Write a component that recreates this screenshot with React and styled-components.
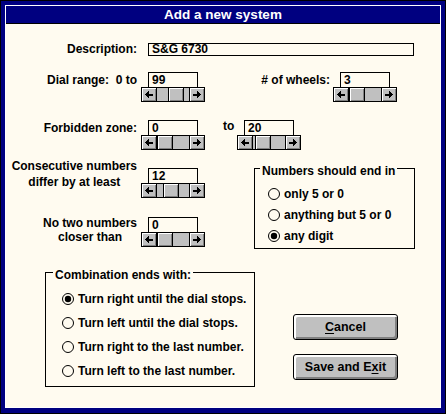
import styled, { createGlobalStyle } from "styled-components";

const GlobalStyle = createGlobalStyle`
  html, body {
    margin: 0;
    padding: 0;
    background: #000080;
    overflow: hidden;
  }
  body {
    font-family: "Liberation Sans", Arial, sans-serif;
    font-weight: 700;
    font-size: 12px;
    color: #000;
  }
`;

const Window = styled.div`
  width: 446px;
  height: 414px;
  box-sizing: border-box;
  border: 1px solid #000;
  background: #000080;
  padding: 4px 4px 5px 4px;
`;

const Frame = styled.div`
  height: 100%;
  box-sizing: border-box;
  border: 1px solid #fff;
  background: #fffbf0;
  display: flex;
  flex-direction: column;
`;

const TitleBar = styled.header`
  height: 17px;
  line-height: 17px;
  border-bottom: 1px solid #000;
  background: #000080;
  color: #fff;
  font-size: 13.5px;
  text-align: center;
`;

const Row = styled.div`
  display: flex;
  align-items: flex-start;
  margin-top: ${(p) => p.$top || 0}px;
  margin-left: ${(p) => p.$left || 0}px;
`;

const Label = styled.div`
  width: ${(p) => p.$width}px;
  text-align: right;
  line-height: 16px;
  white-space: pre;
  margin-right: ${(p) => p.$gap || 0}px;
`;

const StackLabel = styled.div`
  width: 131px;
  margin-right: 4px;
  display: flex;
  justify-content: flex-end;
  margin-top: ${(p) => p.$top || 0}px;

  span {
    text-align: center;
    line-height: ${(p) => p.$lh}px;
  }
`;

const ToLabel = styled.div`
  width: 14px;
  margin-left: 18px;
  line-height: 11px;
  padding-top: 1px;
`;

const TextBox = styled.div`
  box-sizing: border-box;
  width: ${(p) => p.$width}px;
  height: ${(p) => p.$height}px;
  border: 1px solid #000;
  background: #fffbf0;
  padding-left: 3px;
  line-height: ${(p) => p.$height - 2}px;
`;

const SpinWrap = styled.div`
  width: 64px;
  display: flex;
  flex-direction: column;
  margin-top: ${(p) => p.$top || 0}px;

  ${TextBox} {
    margin-left: 7px;
  }
`;

const ScrollBar = styled.div`
  display: flex;
  box-sizing: border-box;
  height: 15px;
  margin-top: -1px;
  border: 1px solid #000;
  background: #c0c0c0;
`;

const ArrowButton = styled.div`
  width: 14px;
  display: flex;
  align-items: center;
  justify-content: center;
  background: #c0c0c0;
  box-shadow: inset 1px 1px 0 #fff, inset -1px -1px 0 #808080;
  border-${(p) => (p.$side === "left" ? "right" : "left")}: 1px solid #000;
`;

const Track = styled.div`
  flex: 1;
  display: flex;
  background: #c0c0c0;
`;

const Thumb = styled.div`
  box-sizing: border-box;
  width: 16px;
  margin-left: ${(p) => p.$pos}px;
  border-left: 1px solid #000;
  border-right: 1px solid #000;
  background: #c0c0c0;
  box-shadow: inset 1px 1px 0 #fff, inset -1px -1px 0 #808080;
`;

const Middle = styled.div`
  display: flex;
  margin-top: 8px;
`;

const LeftColumn = styled.div`
  width: 248px;
  display: flex;
  flex-direction: column;
`;

const GroupBox = styled.div`
  box-sizing: border-box;
  width: ${(p) => p.$width}px;
  height: ${(p) => p.$height}px;
  margin-top: ${(p) => p.$top || 0}px;
  border: 1px solid #000;
  display: flex;
  flex-direction: column;
`;

const Legend = styled.div`
  align-self: flex-start;
  margin: -5px 0 0 ${(p) => p.$left}px;
  padding: 0 2px;
  line-height: 14px;
  background: #fffbf0;
`;

const RadioList = styled.div`
  display: flex;
  flex-direction: column;
  margin-top: 5px;
  padding-left: ${(p) => p.$indent}px;
`;

const RadioRow = styled.div`
  height: ${(p) => p.$height}px;
  display: flex;
  align-items: center;
  gap: 4px;
  white-space: nowrap;
`;

const Bottom = styled.div`
  display: flex;
  margin-top: 23px;
  padding-left: 39px;
`;

const ButtonColumn = styled.div`
  display: flex;
  flex-direction: column;
  gap: 14px;
  margin: 42px 0 0 38px;
`;

const Button = styled.button`
  box-sizing: border-box;
  width: 105px;
  height: 26px;
  padding: 0;
  border: 1px solid #000;
  border-radius: 3px;
  background: #c0c0c0;
  box-shadow: inset 1px 1px 0 #fff, inset 2px 2px 0 #fff,
    inset -1px -1px 0 #808080, inset -2px -2px 0 #808080;
  font: inherit;
  font-size: 12.5px;
  color: #000;

  u {
    text-decoration-thickness: 1px;
    text-underline-offset: 2px;
  }
`;

function Arrow({ dir }) {
  return (
    <svg width="8" height="7" viewBox="0 0 8 7" shapeRendering="crispEdges">
      <path
        d={
          dir === "left"
            ? "M0 3.5 L4 0 V7 Z M4 2.5 H8 V4.5 H4 Z"
            : "M8 3.5 L4 0 V7 Z M4 2.5 H0 V4.5 H4 Z"
        }
        fill="#000"
      />
    </svg>
  );
}

function Spin({ value, pos, top }) {
  return (
    <SpinWrap $top={top}>
      <TextBox $width={50} $height={16}>
        {value}
      </TextBox>
      <ScrollBar>
        <ArrowButton $side="left">
          <Arrow dir="left" />
        </ArrowButton>
        <Track>
          <Thumb $pos={pos} />
        </Track>
        <ArrowButton $side="right">
          <Arrow dir="right" />
        </ArrowButton>
      </ScrollBar>
    </SpinWrap>
  );
}

function Radio({ checked, label, height }) {
  return (
    <RadioRow $height={height}>
      <svg width="12" height="12" viewBox="0 0 12 12">
        <circle cx="6" cy="6" r="5.5" fill="#fffbf0" stroke="#000" />
        {checked && <circle cx="6" cy="6" r="3.2" fill="#000" />}
      </svg>
      <span>{label}</span>
    </RadioRow>
  );
}

const ENDINGS = ["only 5 or 0", "anything but 5 or 0", "any digit"];

const COMBOS = [
  "Turn right until the dial stops.",
  "Turn left until the dial stops.",
  "Turn right to the last number.",
  "Turn left to the last number.",
];

export default function App() {
  return (
    <>
      <GlobalStyle />
      <Window>
        <Frame>
          <TitleBar>Add a new system</TitleBar>

          <Row $top={19}>
            <Label $width={131} $gap={11} style={{ lineHeight: "13px" }}>
              Description:
            </Label>
            <TextBox $width={266} $height={13}>
              S&amp;G 6730
            </TextBox>
          </Row>

          <Row $top={16}>
            <Label $width={131} $gap={4}>
              {"Dial range:  0 to"}
            </Label>
            <Spin value="99" pos={11} />
            <Label $width={125} $gap={3}>
              # of wheels:
            </Label>
            <Spin value="3" pos={0} />
          </Row>

          <Row $top={18}>
            <Label $width={131} $gap={4}>
              Forbidden zone:
            </Label>
            <Spin value="0" pos={0} />
            <ToLabel>to</ToLabel>
            <Spin value="20" pos={2} />
          </Row>

          <Middle>
            <LeftColumn>
              <Row>
                <StackLabel $lh={16}>
                  <span>
                    Consecutive numbers
                    <br />
                    differ by at least
                  </span>
                </StackLabel>
                <Spin value="12" pos={6} top={10} />
              </Row>
              <Row $top={18}>
                <StackLabel $lh={14}>
                  <span>
                    No two numbers
                    <br />
                    closer than
                  </span>
                </StackLabel>
                <Spin value="0" pos={0} top={1} />
              </Row>
            </LeftColumn>

            <GroupBox $width={161} $height={81} $top={10}>
              <Legend $left={5}>Numbers should end in</Legend>
              <RadioList $indent={13}>
                {ENDINGS.map((text, i) => (
                  <Radio key={text} label={text} height={21} checked={i === 2} />
                ))}
              </RadioList>
            </GroupBox>
          </Middle>

          <Bottom>
            <GroupBox $width={210} $height={115}>
              <Legend $left={7}>Combination ends with:</Legend>
              <RadioList $indent={16}>
                {COMBOS.map((text, i) => (
                  <Radio key={text} label={text} height={24} checked={i === 0} />
                ))}
              </RadioList>
            </GroupBox>

            <ButtonColumn>
              <Button>
                <u>C</u>ancel
              </Button>
              <Button>
                Save and E<u>x</u>it
              </Button>
            </ButtonColumn>
          </Bottom>
        </Frame>
      </Window>
    </>
  );
}
